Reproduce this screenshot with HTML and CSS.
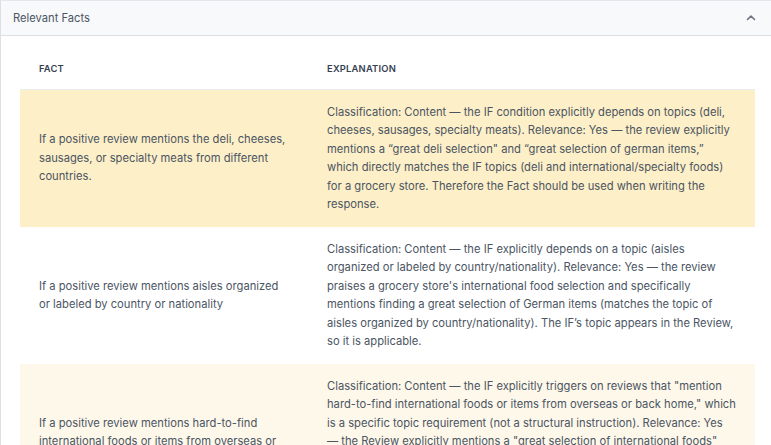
FILE: index.html
```html
<!DOCTYPE html>
<html lang="en">
<head>
    <meta charset="UTF-8">
    <meta name="viewport" content="width=device-width, initial-scale=1.0">
    <title>Relevant Facts</title>
    <link rel="stylesheet" href="styles.css">
</head>
<body>

    <div class="panel">
        <div class="panel-header">
            <span class="panel-title">Relevant Facts</span>
            <svg class="chevron" width="10" height="10" viewBox="0 0 10 10">
                <path d="M1.5 6.5 L5 3 L8.5 6.5" fill="none" stroke="#6b7280" stroke-width="1.6" stroke-linecap="round" stroke-linejoin="round"/>
            </svg>
        </div>

        <div class="panel-body">
            <table class="facts-table">
                <thead>
                    <tr>
                        <th class="col-fact">Fact</th>
                        <th>Explanation</th>
                    </tr>
                </thead>
                <tbody>
                    <tr class="row-strong">
                        <td>If a positive review mentions the deli, cheeses, sausages, or specialty meats from different countries.</td>
                        <td>Classification: Content — the IF condition explicitly depends on topics (deli, cheeses, sausages, specialty meats). Relevance: Yes — the review explicitly mentions a “great deli selection" and “great selection of german items,” which directly matches the IF topics (deli and international/specialty foods) for a grocery store. Therefore the Fact should be used when writing the response.</td>
                    </tr>
                    <tr>
                        <td>If a positive review mentions aisles organized or labeled by country or nationality</td>
                        <td>Classification: Content — the IF explicitly depends on a topic (aisles organized or labeled by country/nationality). Relevance: Yes — the review praises a grocery store's international food selection and specifically mentions finding a great selection of German items (matches the topic of aisles organized by country/nationality). The IF’s topic appears in the Review, so it is applicable.</td>
                    </tr>
                    <tr class="row-light">
                        <td>If a positive review mentions hard-to-find international foods or items from overseas or back home.</td>
                        <td>Classification: Content — the IF explicitly triggers on reviews that "mention hard-to-find international foods or items from overseas or back home," which is a specific topic requirement (not a structural instruction). Relevance: Yes — the Review explicitly mentions a "great selection of international foods" and finding German items, which matches the topic of hard-to-find international foods from back home. Therefore the Fact should be used when writing the response.</td>
                    </tr>
                </tbody>
            </table>
        </div>
    </div>

</body>
</html>
```

FILE: styles.css
```css
body {
    margin: 0;
    font-family: Inter, "Noto Sans", sans-serif;
    background-color: #fff;
    color: #4b5563;
}

.panel {
    border-top: 1px solid #e5e7eb;
    border-left: 1px solid #dcdfe4;
    width: 790px;
    background-color: #fff;
}

.panel-header {
    display: flex;
    justify-content: space-between;
    align-items: center;
    height: 34px;
    padding: 0 15px 0 12px;
    background-color: #f8f9fa;
    border-bottom: 1px solid #dcdfe4;
    width: 743px;
}

.panel-title {
    font-size: 11.2px;
    color: #4b5563;
}

.chevron {
    display: block;
}

.panel-body {
    padding: 24px 19px 20px 19px;
}

.facts-table {
    width: 735px;
    border-collapse: collapse;
    font-size: 11.2px;
    line-height: 18.5px;
}

th {
    text-align: left;
    font-size: 9.4px;
    font-weight: 600;
    letter-spacing: 0.2px;
    text-transform: uppercase;
    color: #374151;
    padding: 0 19px 10px 19px;
    border-bottom: 1px solid #e9ecf0;
}

.col-fact {
    width: 250px;
}

td {
    vertical-align: middle;
    padding: 13px 19px 13px 19px;
    color: #4b5563;
}

.row-strong td {
    background-color: #fdefc7;
}

.row-light td {
    background-color: #fef8ea;
}
```
